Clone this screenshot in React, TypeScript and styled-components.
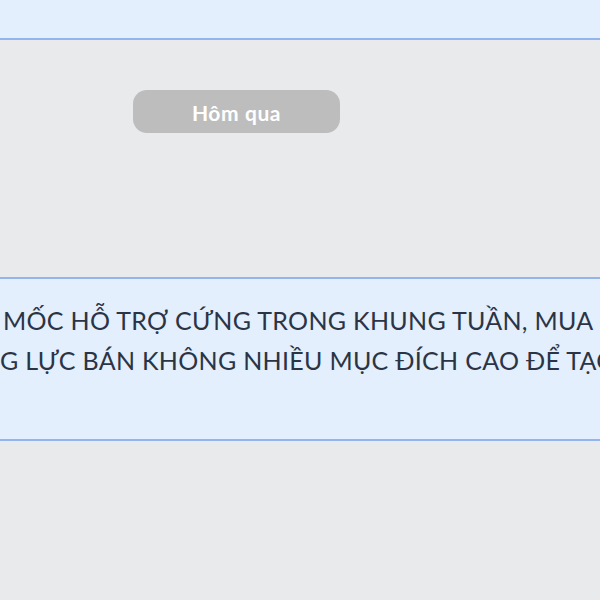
import React from "react";
import styled, { createGlobalStyle } from "styled-components";

const Global = createGlobalStyle`
  html, body { margin: 0; padding: 0; background: #e9eaec; }
  body { font-family: Lato, "Noto Sans", sans-serif; overflow: hidden; }
`;

const Page = styled.div`
  width: 600px;
  height: 600px;
  display: flex;
  flex-direction: column;
  background: #e9eaec;
  overflow: hidden;
`;

const Panel = styled.div<{ $h: number }>`
  height: ${(p) => p.$h}px;
  box-sizing: border-box;
  background: #e3effd;
  flex-shrink: 0;
`;

const TopPanel = styled(Panel)`
  border-bottom: 2px solid #93b4ee;
`;

const MessagePanel = styled(Panel)`
  border-top: 2px solid #93b4ee;
  border-bottom: 2px solid #93b4ee;
  padding: 21px 0 0 3px;
  display: flex;
  flex-direction: column;
  overflow: hidden;
`;

const DateRow = styled.div`
  height: 237px;
  padding: 50px 0 0 133px;
  box-sizing: border-box;
  flex-shrink: 0;
`;

const DatePill = styled.div`
  width: 207px;
  height: 43px;
  border-radius: 14px;
  background: #bdbdbd;
  color: #ffffff;
  font-family: Lato, sans-serif;
  font-weight: 700;
  font-size: 21px;
  letter-spacing: 0.6px;
  display: flex;
  align-items: center;
  justify-content: center;
  padding-top: 1px;
  box-sizing: border-box;
`;

const Line = styled.div<{ $indent?: number }>`
  white-space: nowrap;
  font-family: Lato, sans-serif;
  font-size: 25px;
  line-height: 40px;
  color: #2b3445;
  letter-spacing: 0.3px;
  margin-left: ${(p) => p.$indent ?? 0}px;
`;

export default function App() {
  return (
    <Page>
      <Global />
      <TopPanel $h={40} />
      <DateRow>
        <DatePill>Hôm qua</DatePill>
      </DateRow>
      <MessagePanel $h={164}>
        <Line>MỐC HỖ TRỢ CỨNG TRONG KHUNG TUẦN, MUA</Line>
        <Line $indent={-3}>G LỰC BÁN KHÔNG NHIỀU MỤC ĐÍCH CAO ĐỂ TẠO</Line>
      </MessagePanel>
    </Page>
  );
}
